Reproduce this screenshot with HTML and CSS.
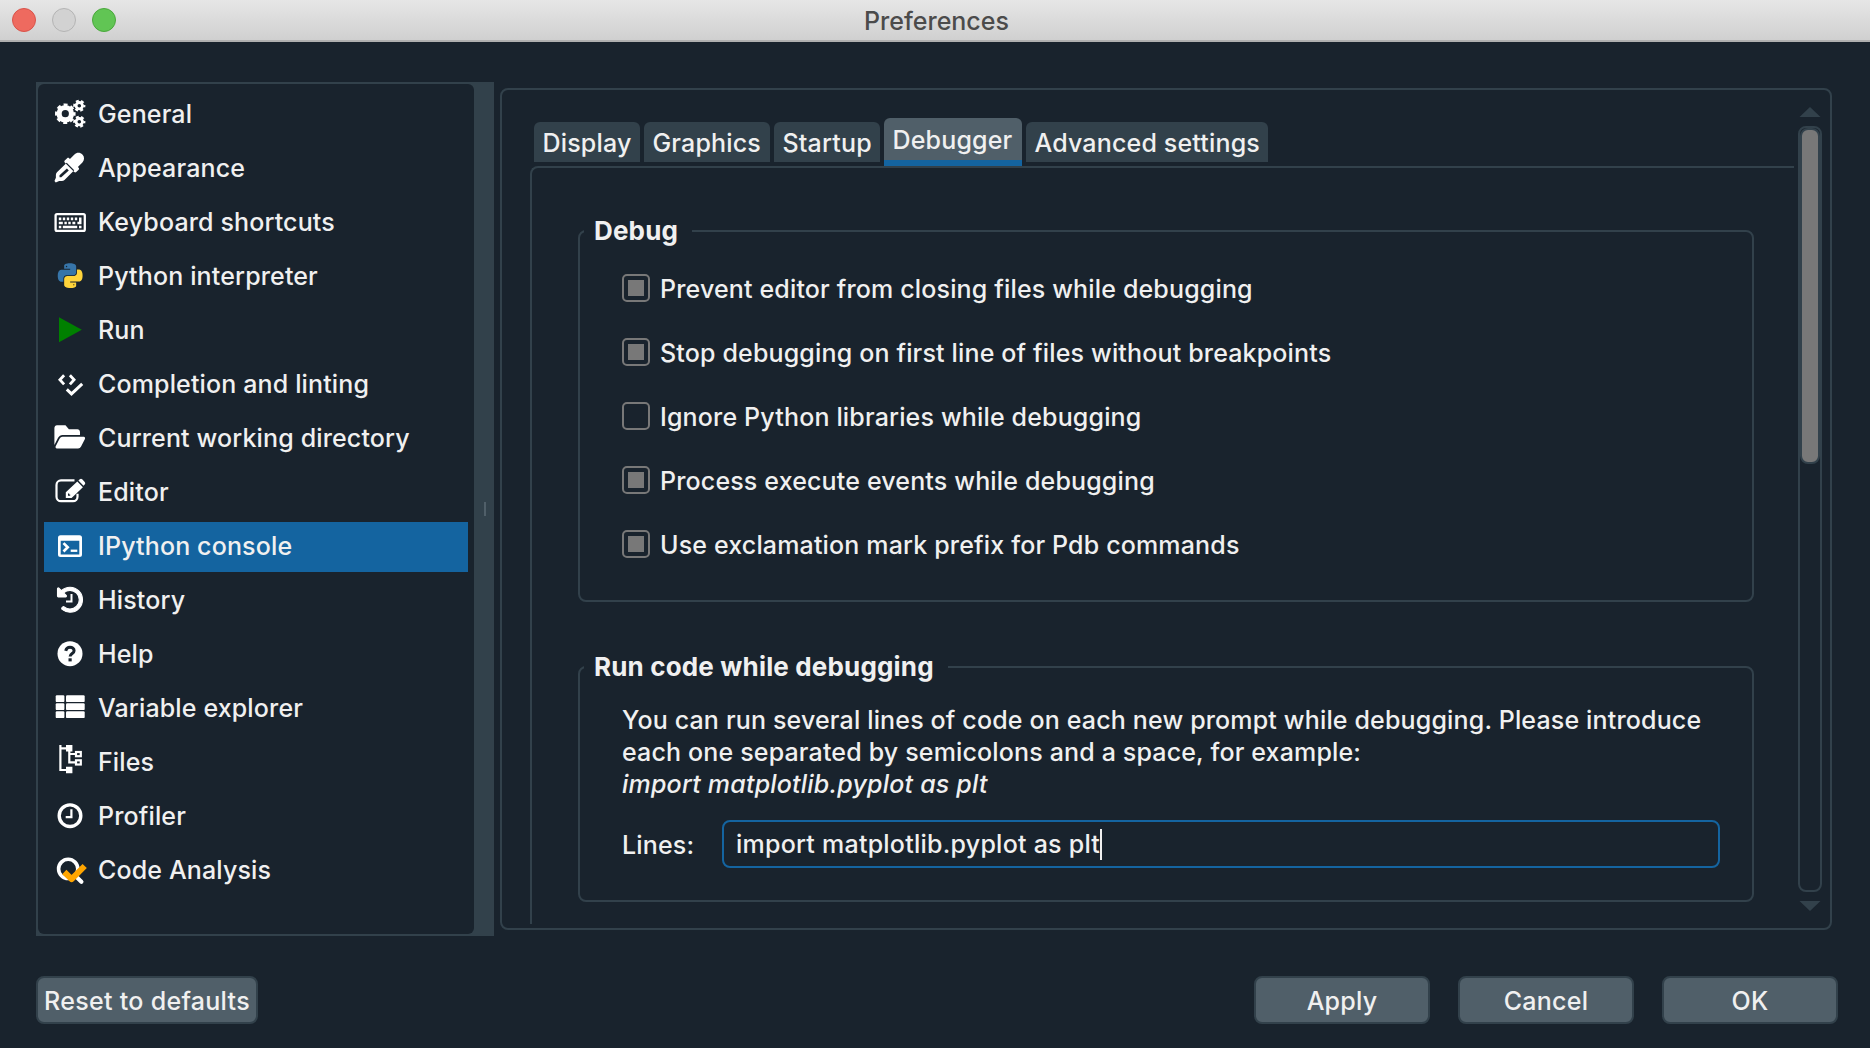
FILE: index.html
```html
<!DOCTYPE html>
<html lang="en">
<head>
<meta charset="utf-8">
<title>Preferences</title>
<link rel="stylesheet" href="styles.css">
</head>
<body>
<div class="window">
  <header class="titlebar">
    <div class="lights">
      <span class="light light-close"></span>
      <span class="light light-min"></span>
      <span class="light light-zoom"></span>
    </div>
    <h1 class="title">Preferences</h1>
  </header>

  <main class="body">
    <div class="splitter">
      <nav class="sidebar">
        <a class="item"><svg class="icon" viewBox="0 0 32 32"><g fill="none" stroke="#fff"><circle cx="11.3" cy="14.7" r="6.2" stroke-width="5.2"/><circle cx="11.3" cy="14.7" r="8.9" stroke-width="2.8" stroke-dasharray="3.9 3.09" stroke-dashoffset="1.95"/><circle cx="25.3" cy="6.7" r="3.2" stroke-width="2.8"/><circle cx="25.3" cy="6.7" r="5" stroke-width="2.2" stroke-dasharray="2.9 2.336" stroke-dashoffset="1.45"/><circle cx="25.3" cy="22.7" r="3.2" stroke-width="2.8"/><circle cx="25.3" cy="22.7" r="5" stroke-width="2.2" stroke-dasharray="2.9 2.336" stroke-dashoffset="1.45"/></g></svg><span>General</span></a>
        <a class="item"><svg class="icon" viewBox="0 0 32 32"><path transform="translate(0 -.2) scale(.0587)" fill="#fff" fill-rule="evenodd" d="M50.75 333.25c-12 12-18.75 28.28-18.75 45.26V424L8 480l22 24 58-24h45.49c16.97 0 33.25-6.74 45.25-18.74l166-164-128-128zM220 268l32 32-128 118H94v-34zM483.88 28.12c-37.47-37.5-98.28-37.5-135.75 0l-77.09 77.09-13.1-13.1c-9.44-9.44-24.65-9.31-33.94 0l-40.97 40.97c-9.37 9.37-9.37 24.57 0 33.94l161.94 161.94c9.44 9.44 24.65 9.31 33.94 0L419.88 288c9.37-9.37 9.37-24.57 0-33.94l-13.1-13.1 77.09-77.09c37.51-37.48 37.51-98.26.01-135.75z"/></svg><span>Appearance</span></a>
        <a class="item"><svg class="icon" viewBox="0 0 32 32"><rect x="1.6" y="7.2" width="29.2" height="16.6" rx="1.4" fill="none" stroke="#fff" stroke-width="2.3"/><path fill="#fff" d="M4.8 10.6h2.5v2.6H4.8zM8.8 10.6h2.4v2.6H8.8zM12.8 10.6h2.4v2.6h-2.4zM16.8 10.6h2.4v2.6h-2.4zM20.8 10.6h2.4v2.6h-2.4zM25 10.6h2.5v6.7h-4.1v-2.6H25zM4.8 14.7h4v2.6h-4zM10.4 14.7h2.4v2.6h-2.4zM14.3 14.7h2.4v2.6h-2.4zM18.4 14.7h2.9v2.6h-2.9zM4.8 18.8h2.5v2.5H4.8zM8.8 18.8h14.4v2.5H8.8zM25 18.8h2.5v2.5H25z"/></svg><span>Keyboard shortcuts</span></a>
        <a class="item"><svg class="icon" viewBox="0 0 32 32"><g transform="translate(3.8 2.3) scale(1.03)"><path fill="#3775a9" d="M14.25.18l.9.2.73.26.59.3.45.32.34.34.25.34.16.33.1.3.04.26.02.2-.01.13V8.5l-.05.63-.13.55-.21.46-.26.38-.3.31-.33.25-.35.19-.35.14-.33.1-.3.07-.26.04-.21.02H8.77l-.69.05-.59.14-.5.22-.41.27-.33.32-.27.35-.2.36-.15.37-.1.35-.07.32-.04.27-.02.21v3.06H3.17l-.21-.03-.28-.07-.32-.12-.35-.18-.36-.26-.36-.36-.35-.46-.32-.59-.28-.73-.21-.88-.14-1.05-.05-1.23.06-1.22.16-1.04.24-.87.32-.71.36-.57.4-.44.42-.33.42-.24.4-.16.36-.1.32-.05.24-.01h.16l.06.01h8.16v-.83H6.18l-.01-2.75-.02-.37.05-.34.11-.31.17-.28.25-.26.31-.23.38-.2.44-.18.51-.15.58-.12.64-.1.71-.06.77-.04.84-.02 1.27.05z"/><path transform="rotate(180 12 12)" fill="#ffd43b" d="M14.25.18l.9.2.73.26.59.3.45.32.34.34.25.34.16.33.1.3.04.26.02.2-.01.13V8.5l-.05.63-.13.55-.21.46-.26.38-.3.31-.33.25-.35.19-.35.14-.33.1-.3.07-.26.04-.21.02H8.77l-.69.05-.59.14-.5.22-.41.27-.33.32-.27.35-.2.36-.15.37-.1.35-.07.32-.04.27-.02.21v3.06H3.17l-.21-.03-.28-.07-.32-.12-.35-.18-.36-.26-.36-.36-.35-.46-.32-.59-.28-.73-.21-.88-.14-1.05-.05-1.23.06-1.22.16-1.04.24-.87.32-.71.36-.57.4-.44.42-.33.42-.24.4-.16.36-.1.32-.05.24-.01h.16l.06.01h8.16v-.83H6.18l-.01-2.75-.02-.37.05-.34.11-.31.17-.28.25-.26.31-.23.38-.2.44-.18.51-.15.58-.12.64-.1.71-.06.77-.04.84-.02 1.27.05z"/><circle cx="8.5" cy="3.1" r=".7" fill="#19232d"/><circle cx="15.5" cy="20.9" r=".7" fill="#6b5a1c"/></g></svg><span>Python interpreter</span></a>
        <a class="item"><svg class="icon" viewBox="0 0 32 32"><path fill="#008000" d="M5 2.2v25l22.8-12.5z"/></svg><span>Run</span></a>
        <a class="item"><svg class="icon" viewBox="0 0 32 32"><g fill="none" stroke="#fff" stroke-width="2.8"><path d="M10.1 6.2L5.9 10.8l4.2 4.6M15.9 6.2l4.2 4.6-4.2 4.6"/><path stroke-width="3" d="M12.8 20.4l4.7 4.5 10.7-10"/></g></svg><span>Completion and linting</span></a>
        <a class="item"><svg class="icon" viewBox="0 0 32 32"><path transform="translate(.4 -1.5) scale(.0533 .06)" fill="#fff" d="M572.694 292.093L500.27 416.248A63.997 63.997 0 0 1 444.989 448H45.025c-18.523 0-30.064-20.093-20.731-36.093l72.424-124.155A64 64 0 0 1 152 256h399.964c18.523 0 30.064 20.093 20.73 36.093zM152 224h328v-48c0-26.51-21.49-48-48-48H272l-64-64H48C21.49 64 0 85.49 0 112v278.046l69.077-118.418C86.214 242.25 117.989 224 152 224z"/></svg><span>Current working directory</span></a>
        <a class="item"><svg class="icon" viewBox="0 0 32 32"><path fill="none" stroke="#fff" stroke-width="2.2" d="M20.5 3.4H7a4.5 4.5 0 0 0-4.5 4.5v11.8A4.5 4.5 0 0 0 7 24.2h12a4.5 4.5 0 0 0 4.5-4.5v-3"/><path fill="#fff" fill-rule="evenodd" d="M11.8 21v-5.7L23.3 4.6l5.6 5.7L17.6 21zM14 16.6v2.2h2.2v-1.3h-1v-.9zM24.4 3.6l1.4-1.3a1.8 1.8 0 0 1 2.4 0l2.5 2.6a1.8 1.8 0 0 1 0 2.5l-1.2 1.3z"/></svg><span>Editor</span></a>
        <a class="item item-selected"><svg class="icon" viewBox="0 0 32 32"><path fill="#fff" fill-rule="evenodd" d="M6.5 4.3h19A2.5 2.5 0 0 1 28 6.8v16.7a2.5 2.5 0 0 1-2.5 2.5h-19A2.5 2.5 0 0 1 4 23.5V6.8a2.5 2.5 0 0 1 2.5-2.5zM6.7 9.7v13.7h18.6V9.7z"/><path fill="none" stroke="#fff" stroke-width="2.7" d="M9.5 12.1l4.2 4.2-4.2 4.2"/><path fill="#fff" d="M16.7 18.6h6.6v2.3h-6.6z"/></svg><span>IPython console</span></a>
        <a class="item"><svg class="icon" viewBox="0 0 32 32"><path transform="translate(3.1 1.8) scale(.0504)" fill="#fff" stroke="#fff" stroke-width="22" d="M504 255.531c.253 136.64-111.18 248.372-247.82 248.468-59.015.042-113.223-20.53-155.822-54.911-11.077-8.94-11.905-25.541-1.839-35.607l11.267-11.267c8.609-8.609 22.353-9.551 31.891-1.984C173.062 425.135 212.781 440 256 440c101.705 0 184-82.311 184-184 0-101.705-82.311-184-184-184-48.814 0-93.149 18.969-126.068 49.932l50.754 50.754c10.08 10.08 2.941 27.314-11.313 27.314H24c-8.837 0-16-7.163-16-16V38.627c0-14.254 17.234-21.393 27.314-11.314l49.372 49.372C129.209 34.136 189.552 8 256 8c136.81 0 247.747 110.78 248 247.531z"/><path fill="none" stroke="#fff" stroke-width="2" d="M17.5 9v7.6H12"/></svg><span>History</span></a>
        <a class="item"><svg class="icon" viewBox="0 0 32 32"><circle cx="16" cy="14.7" r="12.5" fill="#fff"/><path fill="none" stroke="#19232d" stroke-width="3" d="M11.7 11.8c.6-2.4 2.2-3.5 4.3-3.5 2.3 0 4.1 1.3 4.1 3.4 0 2.9-4 2.7-4 5.9"/><path fill="#19232d" d="M14.5 19.3h3.2v3.1h-3.2z"/></svg><span>Help</span></a>
        <a class="item"><svg class="icon" viewBox="0 0 32 32"><g fill="#fff"><rect x="1.7" y="2.3" width="8.7" height="6.8" rx="1.2"/><rect x="12" y="2.3" width="18.7" height="6.8" rx="1.2"/><rect x="1.7" y="10.3" width="8.7" height="6.8" rx="1.2"/><rect x="12" y="10.3" width="18.7" height="6.8" rx="1.2"/><rect x="1.7" y="18.3" width="8.7" height="6.8" rx="1.2"/><rect x="12" y="18.3" width="18.7" height="6.8" rx="1.2"/></g></svg><span>Variable explorer</span></a>
        <a class="item"><svg class="icon" viewBox="0 0 32 32"><g fill="none" stroke="#fff" stroke-width="2.2"><path d="M6.4-2v25H13M6.4 1.3H13M15.3 3v12.3H22M15.3 7H22"/><rect x="22" y="5" width="4.8" height="4.2"/><rect x="22" y="13.3" width="4.8" height="4.2"/></g><path fill="#fff" d="M12-2h6.4v6.6H12zM12 19.8h6.4v6.5H12z"/></svg><span>Files</span></a>
        <a class="item"><svg class="icon" viewBox="0 0 32 32"><g fill="none" stroke="#fff"><circle cx="16" cy="14.7" r="10.8" stroke-width="3.4"/><path stroke-width="2.2" d="M17.4 8.2v8H11.7"/></g></svg><span>Profiler</span></a>
        <a class="item"><svg class="icon" viewBox="0 0 32 32"><g fill="none" stroke-linecap="round"><circle cx="14.2" cy="13.9" r="9.6" stroke="#fff" stroke-width="3.6"/><path stroke="#fff" stroke-width="4.2" d="M22 21.5l5.4 5.2"/><path stroke="#ffa500" stroke-width="6" stroke-linecap="butt" stroke-linejoin="round" d="M10.3 17l7.3 7.1L30.7 11"/></g></svg><span>Code Analysis</span></a>
      </nav>
      <div class="splitter-handle"><span class="grip"></span></div>
    </div>

    <section class="page">
      <div class="tabs-area">
        <div class="tabs">
          <span class="tab tab-display">Display</span>
          <span class="tab tab-graphics">Graphics</span>
          <span class="tab tab-startup">Startup</span>
          <span class="tab tab-debugger tab-active">Debugger</span>
          <span class="tab tab-advanced">Advanced settings</span>
        </div>
        <div class="pane">
          <fieldset class="group group-debug">
            <legend>Debug</legend>
            <label class="check"><span class="box box-on"></span><span class="check-text">Prevent editor from closing files while debugging</span></label>
            <label class="check"><span class="box box-on"></span><span class="check-text">Stop debugging on first line of files without breakpoints</span></label>
            <label class="check"><span class="box"></span><span class="check-text">Ignore Python libraries while debugging</span></label>
            <label class="check"><span class="box box-on"></span><span class="check-text">Process execute events while debugging</span></label>
            <label class="check"><span class="box box-on"></span><span class="check-text">Use exclamation mark prefix for Pdb commands</span></label>
          </fieldset>
          <fieldset class="group group-run">
            <legend>Run code while debugging</legend>
            <p class="hint">You can run several lines of code on each new prompt while debugging. Please introduce<br>each one separated by semicolons and a space, for example:<br><i>import matplotlib.pyplot as plt</i></p>
            <div class="field">
              <span class="field-label">Lines:</span>
              <div class="input"><span>import matplotlib.pyplot as plt</span><span class="caret"></span></div>
            </div>
          </fieldset>
        </div>
      </div>
      <div class="scrollbar">
        <svg class="arrow" viewBox="0 0 22 10"><path d="M11 0l10.5 10H.5z"/></svg>
        <div class="track"><div class="thumb"></div></div>
        <svg class="arrow" viewBox="0 0 22 10"><path d="M11 10L21.5 0H.5z"/></svg>
      </div>
    </section>
  </main>

  <footer class="footer">
    <button class="btn btn-reset">Reset to defaults</button>
    <div class="actions">
      <button class="btn">Apply</button>
      <button class="btn">Cancel</button>
      <button class="btn">OK</button>
    </div>
  </footer>
</div>
</body>
</html>
```
FILE: styles.css
```css
* { box-sizing: border-box; }

body {
  margin: 0;
  background: #19232d;
  color: #f0f0f0;
  font: 500 25px/32px Inter, "Liberation Sans", sans-serif;
  letter-spacing: .16px;
  white-space: nowrap;
}

.window {
  width: 1870px;
  height: 1048px;
  display: flex;
  flex-direction: column;
  overflow: hidden;
}

/* title bar */
.titlebar {
  height: 42px;
  flex: none;
  display: grid;
  grid-template-columns: 1fr auto 1fr;
  padding: 0 9px 0 12px;
  background: linear-gradient(#e6e6e6, #d0d0d0);
  border-bottom: 2px solid #b0b0b0;
}
.lights { display: flex; gap: 16px; padding-top: 8px; }
.light { width: 24px; height: 24px; border-radius: 50%; border: 1px solid; }
.light-close { background: #ee6a5f; border-color: #d9534a; }
.light-min { background: #d2d2d2; border-color: #b4b4b4; }
.light-zoom { background: #61c554; border-color: #4aa83c; }
.title {
  margin: 0;
  padding-top: 5px;
  font-size: 25px;
  font-weight: 500;
  letter-spacing: 0;
  color: #4b4b4b;
}

/* body */
.body { display: flex; align-items: flex-start; padding: 40px 38px 0 36px; }
.splitter {
  width: 458px;
  height: 854px;
  display: flex;
  padding: 2px 0 2px 2px;
  background: #32414b;
}
.sidebar {
  width: 436px;
  padding: 6px;
  display: flex;
  flex-direction: column;
  gap: 4px;
  border-radius: 6px;
  background: #19232d;
}
.item {
  height: 50px;
  flex: none;
  display: flex;
  align-items: center;
  gap: 12px;
  padding-left: 10px;
  letter-spacing: .14px;
}
.item span { padding-bottom: 2px; }
.item-selected { background: #1464a0; }
.icon { width: 32px; height: 32px; overflow: visible; }
.splitter-handle { flex: 1; display: flex; align-items: center; justify-content: center; padding-left: 2px; }
.grip { width: 2px; height: 14px; background: #505f69; }

.page {
  width: 1332px;
  height: 842px;
  margin: 6px 0 0 6px;
  display: flex;
  border: 2px solid #32414b;
  border-radius: 8px;
}
.tabs-area { width: 1264px; margin-left: 28px; padding-top: 28px; }
.tabs { display: flex; gap: 4px; height: 48px; padding: 4px 0 0 4px; }
.tab {
  height: 40px;
  padding: 5px 0 0 8.5px;
  border-radius: 6px 6px 0 0;
  background: #32414b;
  letter-spacing: .17px;
}
.tab-display { width: 106px; }
.tab-graphics { width: 126px; }
.tab-startup { width: 106px; }
.tab-debugger { width: 138px; }
.tab-advanced { width: 242px; }
.tab-active {
  height: 48px;
  margin-top: -4px;
  padding-top: 6px;
  background: #505f69;
  border-bottom: 6px solid #1464a0;
}
.pane {
  height: 758px;
  padding: 47px 40px 0 46px;
  border: solid #32414b;
  border-width: 2px 0 0 2px;
  border-top-left-radius: 8px;
}

/* groups */
.group {
  width: 1176px;
  min-width: 0;
  margin: 0;
  border: 2px solid #32414b;
  border-radius: 8px;
}
.group legend {
  height: 32px;
  margin-left: -38px;
  padding: 0 14px 0 10px;
  font-size: 26px;
  font-weight: 700;
  letter-spacing: .16px;
}
.group-debug { height: 387px; padding: 27px 0 0 42px; }
.group-run { height: 251px; margin-top: 49px; padding: 21px 32px 0 42px; }
.check { display: flex; align-items: center; gap: 10px; height: 28px; margin-bottom: 36px; }
.check-text { padding-top: 2px; }
.box { width: 28px; height: 28px; padding: 4px; border: 2px solid #787878; border-radius: 5px; }
.box-on::before { content: ""; display: block; width: 16px; height: 16px; background: #787878; }

.hint { margin: 0; }
.hint i { letter-spacing: .2px; }
.field { display: flex; align-items: center; margin-top: 20px; }
.field-label { width: 100px; padding-top: 2px; }
.input {
  width: 998px;
  height: 48px;
  display: flex;
  align-items: center;
  padding-left: 12px;
  border: 2px solid #1464a0;
  border-radius: 8px;
  letter-spacing: .24px;
}
.caret { width: 2px; height: 31px; background: #f0f0f0; }

/* scroll bar */
.scrollbar {
  width: 24px;
  margin-left: 4px;
  padding: 17px 0;
  display: flex;
  flex-direction: column;
  align-items: center;
  gap: 9px;
}
.arrow { width: 22px; height: 10px; flex: none; fill: #32414b; }
.track { width: 24px; height: 766px; border: 2px solid #32414b; border-radius: 8px; }
.thumb { height: 336px; border: 2px solid #32414b; border-radius: 8px; background: #787878; }

/* footer */
.footer { display: flex; justify-content: space-between; padding: 40px 32px 0 36px; }
.actions { display: flex; gap: 28px; }
.btn {
  width: 176px;
  height: 48px;
  padding: 1px 0 0;
  border: 2px solid #32414b;
  border-radius: 8px;
  background: #505f69;
  color: inherit;
  font: inherit;
  letter-spacing: .25px;
}
.btn-reset { width: 222px; letter-spacing: .3px; }
```
